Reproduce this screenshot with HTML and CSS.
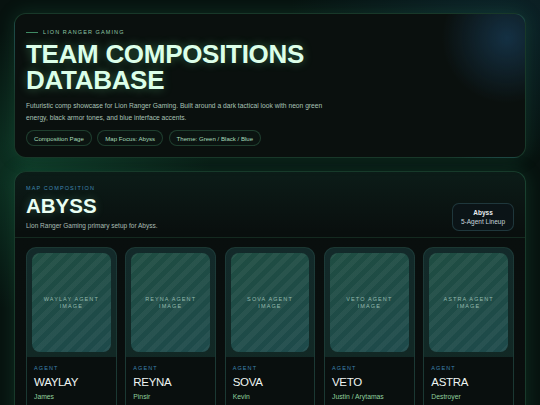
FILE: index.html
```html
<!DOCTYPE html>
<html>
<head>
<meta charset="utf-8">
<link rel="stylesheet" href="styles.css">
</head>
<body>
<div class="page">
  <header class="hero">
    <div class="eyebrow"><span class="eyebrow-line"></span>LION RANGER GAMING</div>
    <h1 class="title">TEAM COMPOSITIONS<br>DATABASE</h1>
    <p class="lead">Futuristic comp showcase for Lion Ranger Gaming. Built around a dark tactical look with neon green energy, black armor tones, and blue interface accents.</p>
    <div class="pills">
      <span class="pill">Composition Page</span>
      <span class="pill">Map Focus: Abyss</span>
      <span class="pill">Theme: Green / Black / Blue</span>
    </div>
  </header>

  <section class="map">
    <div class="map-head">
      <div class="map-info">
        <div class="map-label">MAP COMPOSITION</div>
        <h2 class="map-title">ABYSS</h2>
        <p class="map-sub">Lion Ranger Gaming primary setup for Abyss.</p>
      </div>
      <div class="badge"><strong>Abyss</strong><span>5-Agent Lineup</span></div>
    </div>
    <div class="agents">
      <div class="agent">
        <div class="agent-img"><span>WAYLAY AGENT<br>IMAGE</span></div>
        <div class="agent-body"><div class="agent-label">AGENT</div><div class="agent-name">WAYLAY</div><div class="agent-player">James</div></div>
      </div>
      <div class="agent">
        <div class="agent-img"><span>REYNA AGENT<br>IMAGE</span></div>
        <div class="agent-body"><div class="agent-label">AGENT</div><div class="agent-name">REYNA</div><div class="agent-player">Pinsir</div></div>
      </div>
      <div class="agent">
        <div class="agent-img"><span>SOVA AGENT<br>IMAGE</span></div>
        <div class="agent-body"><div class="agent-label">AGENT</div><div class="agent-name">SOVA</div><div class="agent-player">Kevin</div></div>
      </div>
      <div class="agent">
        <div class="agent-img"><span>VETO AGENT<br>IMAGE</span></div>
        <div class="agent-body"><div class="agent-label">AGENT</div><div class="agent-name">VETO</div><div class="agent-player">Justin / Arytamas</div></div>
      </div>
      <div class="agent">
        <div class="agent-img"><span>ASTRA AGENT<br>IMAGE</span></div>
        <div class="agent-body"><div class="agent-label">AGENT</div><div class="agent-name">ASTRA</div><div class="agent-player">Destroyer</div></div>
      </div>
    </div>
  </section>
</div>
</body>
</html>
```

FILE: styles.css
```css
* { box-sizing: border-box; }
html, body { margin: 0; padding: 0; }
body {
  width: 540px;
  height: 405px;
  overflow: hidden;
  font-family: "Liberation Sans", Arial, sans-serif;
  color: #d8f5e6;
  background:
    radial-gradient(ellipse 260px 200px at 30px 170px, rgba(20, 90, 60, 0.45), transparent 70%),
    radial-gradient(ellipse 300px 200px at 500px 20px, rgba(20, 60, 80, 0.4), transparent 70%),
    #07120f;
}
.page {
  padding: 13px 14px;
  display: flex;
  flex-direction: column;
  gap: 13px;
}
.hero {
  position: relative;
  height: 145px;
  padding: 15px 11px 0;
  border-radius: 12px;
  border: 1px solid rgba(60, 160, 110, 0.28);
  background:
    radial-gradient(circle 65px at 492px 24px, rgba(30, 80, 120, 0.5), transparent 100%),
    #0a100e;
  box-shadow: 0 0 18px rgba(40, 150, 100, 0.22);
}
.eyebrow {
  display: flex;
  align-items: center;
  gap: 5px;
  font-size: 5.5px;
  letter-spacing: 1.1px;
  color: #8fc7a6;
  line-height: 7px;
}
.eyebrow-line {
  display: inline-block;
  width: 12px;
  height: 1px;
  background: #3f8a63;
}
.title {
  margin: 5px 0 0;
  font-size: 26px;
  line-height: 26px;
  font-weight: 700;
  letter-spacing: -0.3px;
  color: #dcffe9;
  text-shadow: 0 0 10px rgba(120, 255, 170, 0.35);
}
.lead {
  margin: 7px 0 0;
  width: 310px;
  font-size: 6.7px;
  line-height: 11.5px;
  color: #a9c2b6;
}
.pills {
  margin-top: 7px;
  display: flex;
  gap: 5.5px;
}
.pill {
  height: 16px;
  padding: 0 7px;
  display: flex;
  align-items: center;
  font-size: 6.1px;
  color: #a9dcbc;
  border: 1px solid rgba(70, 140, 100, 0.35);
  border-radius: 8px;
  background: #0b1411;
}
.map {
  border-radius: 12px;
  border: 1px solid rgba(60, 160, 110, 0.3);
  background: linear-gradient(180deg, #0c1c18 0%, #090f0e 60px, #090e0d 100%);
  box-shadow: 0 0 18px rgba(40, 150, 100, 0.22);
  height: 260px;
}
.map-head {
  display: flex;
  justify-content: space-between;
  align-items: flex-end;
  padding: 13px 11px 6px;
  border-bottom: 1px solid rgba(60, 140, 100, 0.22);
}
.map-label {
  font-size: 5.5px;
  letter-spacing: 1.1px;
  color: #3f86b0;
  line-height: 7px;
}
.map-title {
  margin: 2px 0 0;
  font-size: 20.5px;
  line-height: 24px;
  font-weight: 700;
  color: #eafff3;
  text-shadow: 0 0 8px rgba(150, 255, 200, 0.25);
}
.map-sub {
  margin: 4px 0 1px;
  font-size: 6.5px;
  line-height: 8px;
  color: #a9bdb4;
}
.badge {
  margin-bottom: 0;
  width: 62px;
  height: 28px;
  display: flex;
  flex-direction: column;
  align-items: center;
  justify-content: center;
  gap: 1px;
  border: 1px solid rgba(70, 120, 130, 0.35);
  border-radius: 7px;
  background: #0b1417;
  font-size: 6.5px;
  line-height: 7.5px;
  color: #c7d4dc;
}
.badge strong { color: #e8eef2; }
.agents {
  display: grid;
  grid-template-columns: repeat(5, 1fr);
  gap: 8.7px;
  padding: 9px 11px 0;
}
.agent {
  border-radius: 10px 10px 0 0;
  background: linear-gradient(180deg, #132a2a 0%, #112722 100%);
  overflow: hidden;
  height: 160px;
  border: 1px solid rgba(60, 110, 100, 0.25);
  border-bottom: none;
}
.agent-img {
  margin: 5px 5px 0;
  height: 99px;
  border-radius: 8px;
  display: flex;
  align-items: center;
  justify-content: center;
  text-align: center;
  background:
    repeating-linear-gradient(135deg, rgba(255, 255, 255, 0.045) 0 5px, transparent 5px 10px),
    linear-gradient(160deg, #1f4d42 0%, #1e4a4b 100%);
}
.agent-img span {
  font-size: 5.5px;
  line-height: 6.5px;
  letter-spacing: 1.1px;
  color: #93b9ad;
}
.agent-body {
  margin-top: 5px;
  height: 60px;
  background: #090f0e;
  padding: 8px 7px 0;
}
.agent-label {
  font-size: 5.5px;
  letter-spacing: 1.1px;
  color: #3d82ae;
  line-height: 7px;
}
.agent-name {
  margin-top: 3px;
  font-size: 11.5px;
  line-height: 14px;
  color: #eef5f2;
  letter-spacing: -0.3px;
}
.agent-player {
  margin-top: 3px;
  font-size: 6.8px;
  line-height: 9px;
  color: #8fcf9d;
}
```
